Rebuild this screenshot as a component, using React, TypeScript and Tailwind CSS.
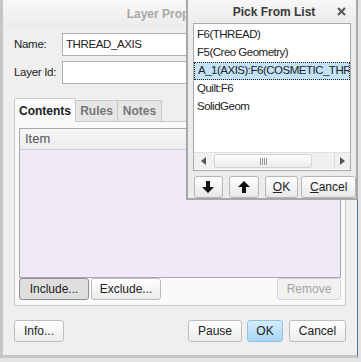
const font = { fontFamily: '"Liberation Sans", Arial, sans-serif' };

function Btn({ children, className = "" }: { children: React.ReactNode; className?: string }) {
  return (
    <div
      className={
        "flex items-center justify-center h-[22px] rounded-[3px] border text-[12px] " + className
      }
    >
      {children}
    </div>
  );
}

function PickFromList() {
  const items = ["F6(THREAD)", "F5(Creo Geometry)", "A_1(AXIS):F6(COSMETIC_THREAD)", "Quilt:F6", "SolidGeom"];
  return (
    <div className="absolute left-[186px] top-0 w-[172px] h-[200px] bg-[#ececec] border-l-2 border-b-2 border-r-2 border-[#a8a8a8] flex flex-col">
      <div className="h-[23px] flex items-center relative bg-gradient-to-b from-[#f7f7f7] to-[#ebebeb]">
        <div className="flex-1 text-center font-bold text-[12px] text-[#3a3a3a] pl-[4px]">Pick From List</div>
        <svg className="absolute right-[10px] top-[7px]" width="9" height="9" viewBox="0 0 9 9">
          <path d="M1 1L8 8M8 1L1 8" stroke="#555" strokeWidth="2" />
        </svg>
      </div>
      <div className="mx-[5px] h-[148px] bg-white border border-[#a9a9a9] flex flex-col">
        <div className="flex-1 pt-[2px] overflow-hidden">
          {items.map((t, i) => (
            <div
              key={t}
              className={
                "h-[18px] flex items-center pl-[3px] text-[11.5px] tracking-[-0.5px] whitespace-nowrap overflow-hidden text-[#222] " +
                (i === 2 ? "bg-[#c4e2f8] border border-dotted border-[#222]" : "")
              }
            >
              {t}
            </div>
          ))}
        </div>
        <div className="h-[17px] flex items-stretch bg-[#f0f0f0] border-t border-[#e0e0e0] mb-[1px]">
          <div className="w-[18px] flex items-center justify-center">
            <svg width="5" height="8" viewBox="0 0 5 8"><path d="M5 0L0 4L5 8Z" fill="#555" /></svg>
          </div>
          <div className="w-[98px] ml-[2px] my-[1px] bg-gradient-to-b from-white to-[#ececec] border border-[#d4d4d4] rounded-[2px] flex items-center justify-center gap-[1px]">
            <span className="w-px h-[7px] bg-[#999]" />
            <span className="w-px h-[7px] bg-[#999]" />
            <span className="w-px h-[7px] bg-[#999]" />
            <span className="w-px h-[7px] bg-[#999]" />
          </div>
          <div className="flex-1" />
          <div className="w-[16px] flex items-center justify-center border-l border-[#ddd]">
            <svg width="5" height="8" viewBox="0 0 5 8"><path d="M0 0L5 4L0 8Z" fill="#555" /></svg>
          </div>
        </div>
      </div>
      <div className="flex mt-[5px] ml-[6px] gap-[6px]">
        <Btn className="w-[29px] border-[#b5b5b5] bg-gradient-to-b from-white to-[#e8e8e8]">
          <svg width="12" height="12" viewBox="0 0 12 12"><path d="M4 0H8V6H12L6 12L0 6H4Z" fill="#111" /></svg>
        </Btn>
        <Btn className="w-[30px] border-[#b5b5b5] bg-gradient-to-b from-white to-[#e8e8e8]">
          <svg width="12" height="12" viewBox="0 0 12 12"><path d="M4 12H8V6H12L6 0L0 6H4Z" fill="#111" /></svg>
        </Btn>
        <Btn className="w-[34px] border-[#b5b5b5] bg-gradient-to-b from-white to-[#e8e8e8] text-[#222]">
          <span><span className="underline">O</span>K</span>
        </Btn>
        <Btn className="w-[55px] -ml-[3px] border-[#b5b5b5] bg-gradient-to-b from-white to-[#e8e8e8] text-[#222]">
          <span><span className="underline">C</span>ancel</span>
        </Btn>
      </div>
    </div>
  );
}

export default function App() {
  return (
    <div className="w-[361px] h-[362px] bg-[#e4e4e4] relative overflow-hidden" style={font}>
      <div className="w-[358px] h-[358px] bg-[#efefef] border-l-[3px] border-b-[3px] border-[#c6c6c6] border-r border-r-[#4a7397] flex flex-col">
        <div className="h-[27px] flex items-center bg-gradient-to-b from-[#f8f8f8] to-[#ececec]">
          <div className="w-full text-center font-bold text-[12px] text-[#a9a9a9] pr-[12px]">Layer Properties</div>
        </div>
        <div className="flex flex-col px-[11px] pt-[6px]">
          <div className="flex items-center h-[23px]">
            <span className="w-[48px] text-[11.5px] tracking-[-0.3px] text-[#222]">Name:</span>
            <div className="flex-1 h-[23px] bg-white border border-[#b0b0b0] flex items-center pl-[3px] text-[11.5px] tracking-[-0.4px] text-[#222]">
              THREAD_AXIS
            </div>
          </div>
          <div className="flex items-center h-[23px] mt-[5px]">
            <span className="w-[48px] text-[11.5px] tracking-[-0.3px] text-[#222]">Layer Id:</span>
            <div className="flex-1 h-[23px] bg-white border border-[#b0b0b0]" />
          </div>

          <div className="flex items-end mt-[13px] h-[24px]">
            <div className="w-[62px] h-[24px] bg-[#fafafa] border border-b-0 border-[#c8c8c8] rounded-t-[2px] flex items-center justify-center font-bold text-[12px] text-[#222] relative top-[1px]">
              Contents
            </div>
            <div className="w-[42px] h-[21px] bg-[#e6e6e6] border border-b-0 border-l-0 border-[#c8c8c8] flex items-center justify-center font-bold text-[12px] text-[#777]">
              Rules
            </div>
            <div className="w-[44px] h-[21px] bg-[#e6e6e6] border border-b-0 border-l-0 border-[#c8c8c8] flex items-center justify-center font-bold text-[12px] text-[#777]">
              Notes
            </div>
          </div>
          <div className="h-[185px] bg-[#fafafa] border border-[#c8c8c8] px-[4px] pt-[6px] flex flex-col">
            <div className="h-[150px] border border-[#a8a8a8] flex flex-col">
              <div className="h-[21px] bg-gradient-to-b from-[#f6f6f6] to-[#ececec] border-b border-[#cfcfcf] flex items-center pl-[5px] text-[13px] text-[#555]">
                Item
              </div>
              <div className="flex-1 bg-[#efe9f8]" />
            </div>
            <div className="flex gap-[2px]">
              <Btn className="w-[70px] border-[#8e8e8e] bg-[#dedede] text-[#222]">Include...</Btn>
              <Btn className="w-[70px] border-[#bdbdbd] bg-gradient-to-b from-white to-[#ececec] text-[#222]">Exclude...</Btn>
              <div className="flex-1" />
              <Btn className="w-[64px] border-[#d4d4d4] bg-[#f1f1f1] text-[#a4a4a4]">Remove</Btn>
            </div>
          </div>
          <div className="flex mt-[14px] items-center">
            <Btn className="w-[50px] border-[#bdbdbd] bg-gradient-to-b from-white to-[#ececec] text-[#222]">Info...</Btn>
            <div className="flex-1" />
            <Btn className="w-[54px] border-[#bdbdbd] bg-gradient-to-b from-white to-[#ececec] text-[#222]">Pause</Btn>
            <Btn className="w-[36px] ml-[5px] border-[#8fc3e8] bg-gradient-to-b from-[#d6ecfb] to-[#a9d5f3] text-[#222]">OK</Btn>
            <Btn className="w-[57px] ml-[6px] border-[#bdbdbd] bg-gradient-to-b from-white to-[#ececec] text-[#222]">Cancel</Btn>
          </div>
        </div>
      </div>
      <PickFromList />
    </div>
  );
}
